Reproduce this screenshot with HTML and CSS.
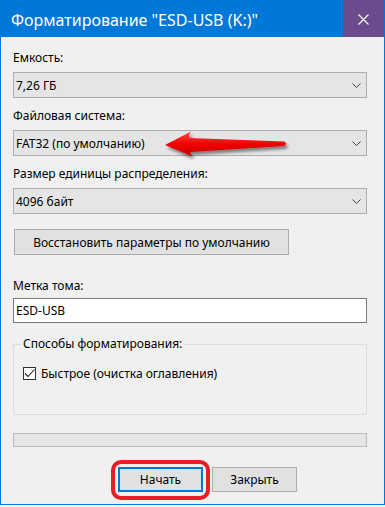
FILE: index.html
```html
<!DOCTYPE html>
<html lang="ru">
  <head>
    <meta charset="UTF-8" />
    <title>Форматирование</title>
    <link rel="stylesheet" href="styles.css">
  </head>
  <body>
    <div class="window">
      <div class="titlebar">
        <span class="title">Форматирование "ESD-USB (K:)"</span>
        <div class="close-btn">
          <svg width="11" height="11" viewBox="0 0 11 11">
            <path d="M0.5 0.5 L10.5 10.5 M10.5 0.5 L0.5 10.5" stroke="#fff" stroke-width="1.1" fill="none" />
          </svg>
        </div>
      </div>

      <div class="content">
        <div class="field-label">Емкость:</div>
        <div class="combo">
          <span>7,26 ГБ</span>
          <svg class="chevron" width="9" height="5" viewBox="0 0 9 5"><path d="M0.5 0.5 L4.5 4.5 L8.5 0.5" /></svg>
        </div>

        <div class="field-label">Файловая система:</div>
        <div class="combo">
          <span>FAT32 (по умолчанию)</span>
          <svg class="chevron" width="9" height="5" viewBox="0 0 9 5"><path d="M0.5 0.5 L4.5 4.5 L8.5 0.5" /></svg>
        </div>

        <div class="field-label">Размер единицы распределения:</div>
        <div class="combo">
          <span>4096 байт</span>
          <svg class="chevron" width="9" height="5" viewBox="0 0 9 5"><path d="M0.5 0.5 L4.5 4.5 L8.5 0.5" /></svg>
        </div>

        <button class="btn btn-restore">Восстановить параметры по умолчанию</button>

        <div class="field-label label-volume">Метка тома:</div>
        <div class="text-input">ESD-USB</div>

        <fieldset class="group">
          <legend>Способы форматирования:</legend>
          <div class="check-row">
            <span class="checkbox">
              <svg width="11" height="11" viewBox="0 0 11 11"><path d="M1 5.5 L4 8.5 L10.5 1.5" /></svg>
            </span>
            <span>Быстрое (очистка оглавления)</span>
          </div>
        </fieldset>

        <div class="progress"></div>

        <div class="actions">
          <div class="btn-mark">
            <button class="btn btn-default">Начать</button>
          </div>
          <button class="btn">Закрыть</button>
        </div>
      </div>

      <!-- red arrow pointing at the file system -->
      <svg class="arrow" width="140" height="42" viewBox="0 0 140 42">
        <defs>
          <linearGradient id="arrowFill" x1="0" y1="0" x2="0" y2="1">
            <stop offset="0" stop-color="#ff4a4a" />
            <stop offset="0.5" stop-color="#f20000" />
            <stop offset="1" stop-color="#c00000" />
          </linearGradient>
          <filter id="arrowShadow" x="-10%" y="-30%" width="130%" height="180%">
            <feDropShadow dx="2" dy="3" stdDeviation="1.6" flood-color="#000" flood-opacity="0.45" />
          </filter>
        </defs>
        <path d="M5 20 L31 6.5 Q28.5 10 29.5 13 L124 16.5 Q128 18.5 124 21 L30.5 27 Q30 29.5 32.5 31.5 Z"
              fill="url(#arrowFill)" filter="url(#arrowShadow)" />
      </svg>
    </div>
  </body>
</html>
```

FILE: styles.css
```css
body {
  margin: 0;
  background-color: #ffffff;
  font-family: "Noto Sans", "Open Sans", sans-serif;
  font-size: 12px;
  color: #000;
}

.window {
  position: relative;
  width: 385px;
  height: 505px;
  box-sizing: border-box;
  border: 1px solid #0078d7;
  border-top: none;
  background-color: #f0f0f0;
  display: flex;
  flex-direction: column;
}

.titlebar {
  height: 37px;
  background-color: #0078d7;
  display: flex;
  justify-content: space-between;
}

.title {
  color: #fff;
  font-size: 16px;
  line-height: 33px;
  padding: 4px 0 0 10px;
}

.close-btn {
  width: 41px;
  background-color: #6a4b8c;
  display: flex;
  align-items: center;
  justify-content: center;
  padding: 2px 1px 0 0;
  box-sizing: border-box;
}

.content {
  padding: 13px 17px 0 12px;
  display: flex;
  flex-direction: column;
}

.field-label {
  line-height: 16px;
  margin: 10px 0 6px;
}

.field-label:first-child {
  margin-top: 0;
}

.combo {
  height: 26px;
  box-sizing: border-box;
  border: 1px solid #adadad;
  background-color: #e5e5e5;
  display: flex;
  align-items: center;
  justify-content: space-between;
  padding: 0 5px 0 2px;
}

.chevron path {
  fill: none;
  stroke: #444;
  stroke-width: 1;
}

.btn {
  font-family: "Noto Sans", "Open Sans", sans-serif;
  font-size: 12px;
  color: #000;
  height: 25px;
  width: 85px;
  padding: 0;
  box-sizing: border-box;
  border: 1px solid #adadad;
  background-color: #e1e1e1;
}

.btn-restore {
  width: 275px;
  height: 26px;
  margin: 15px 0 0 1px;
}

.label-volume {
  margin: 23px 0 4px;
}

.text-input {
  height: 25px;
  box-sizing: border-box;
  border: 1px solid #7a7a7a;
  background-color: #fff;
  padding-left: 2px;
  display: flex;
  align-items: center;
}

.group {
  margin: 13px 0 0;
  padding: 14px 7px 34px;
  border: 1px solid #dcdcdc;
  min-width: 0;
}

.group legend {
  padding: 0 2px;
  line-height: 16px;
}

.check-row {
  display: flex;
  align-items: center;
  gap: 5px;
  height: 14px;
  padding-left: 2px;
}

.checkbox {
  width: 13px;
  height: 13px;
  box-sizing: border-box;
  border: 1px solid #333;
  background-color: #fff;
  display: flex;
  align-items: center;
  justify-content: center;
}

.checkbox path {
  fill: none;
  stroke: #222;
  stroke-width: 1.1;
}

.progress {
  height: 14px;
  margin-top: 18px;
  box-sizing: border-box;
  border: 1px solid #bcbcbc;
  background-color: #e6e6e6;
}

.actions {
  display: flex;
  gap: 9px;
  margin: 20px 0 0 105px;
}

.btn-mark {
  position: relative;
  display: flex;
}

.btn-default {
  border: 2px solid #0078d7;
}

.btn-mark::after {
  content: "";
  position: absolute;
  top: -7px;
  right: -7px;
  bottom: -8px;
  left: -7px;
  border: 4px solid #ec1c24;
  border-radius: 10px;
}

.arrow {
  position: absolute;
  left: 159px;
  top: 125px;
}
```
